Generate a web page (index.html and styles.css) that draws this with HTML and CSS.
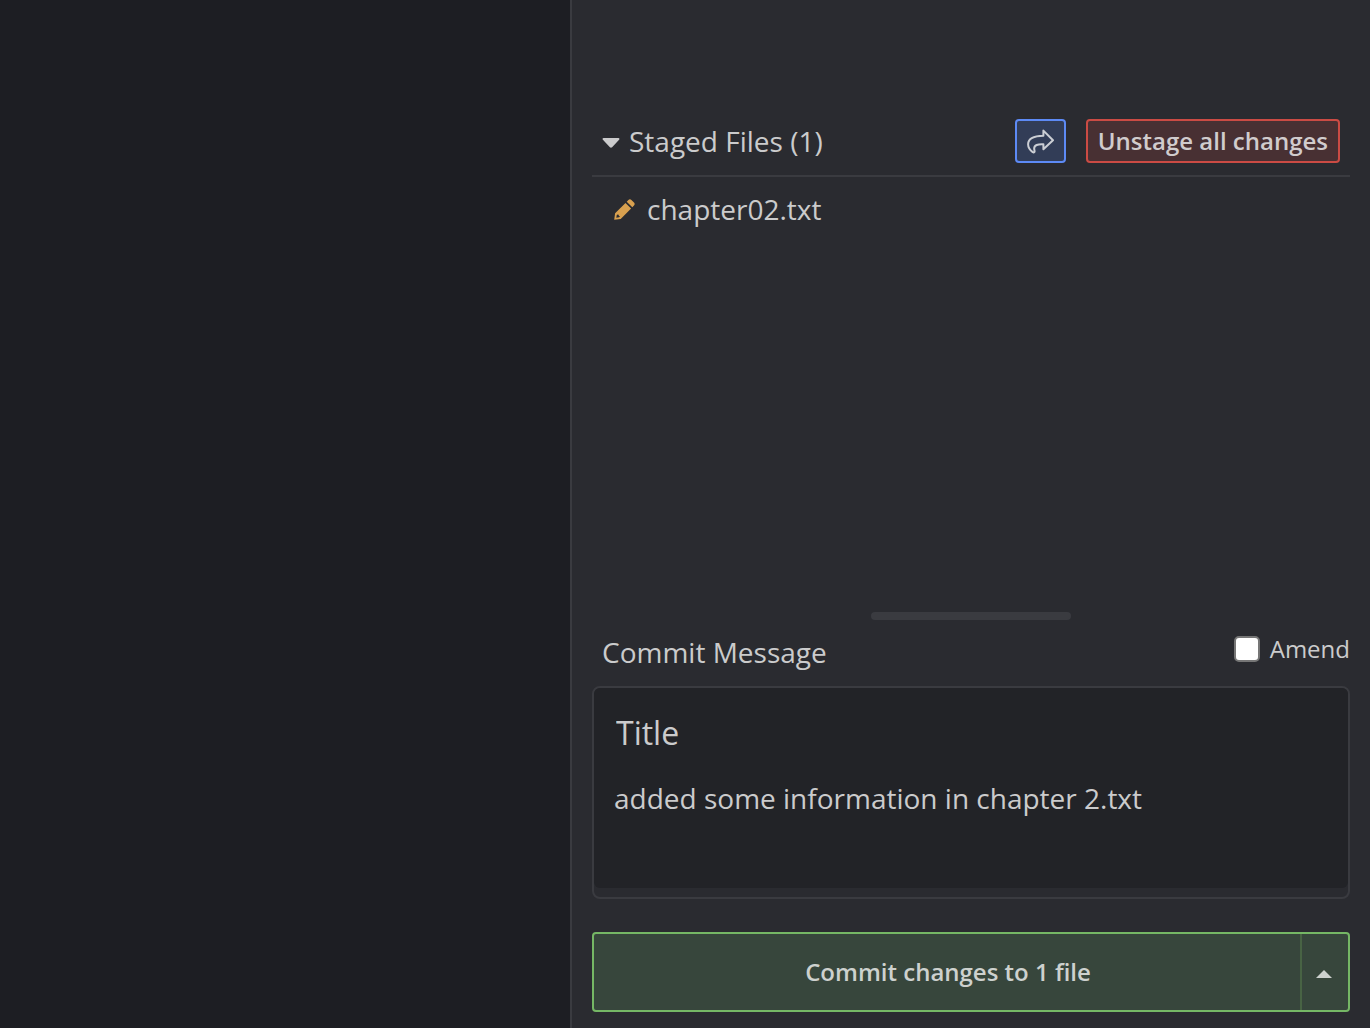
FILE: index.html
```html
<!DOCTYPE html>
<html lang="en">
<head>
<meta charset="utf-8">
<meta name="viewport" content="width=device-width, initial-scale=1">
<title>Commit panel</title>
<link rel="stylesheet" href="styles.css">
</head>
<body>
<main class="graph" aria-label="Commit graph"></main>
<aside class="panel">
  <section class="staged">
    <header class="staged-header">
      <button class="toggle" type="button" aria-expanded="true">
        <svg class="caret" viewBox="0 -4 18 14" aria-hidden="true"><path d="M1.6 0h14.8c1 0 1.4 1 .7 1.7l-7 7.6c-.6.6-1.6.6-2.2 0l-7-7.6C.2 1 .6 0 1.6 0z"/></svg>
        <span>Staged Files (1)</span>
      </button>
      <button class="btn btn-share" type="button" aria-label="Share changes">
        <svg class="share-icon" viewBox="0 0 27 25" aria-hidden="true"><path d="M16.4 1.6 L26 11.2 L16.4 20.2 V15.2 C11 14.9 6.9 16 7.2 19.8 C7.3 21.2 7.8 22 7.5 22.9 C7.2 23.6 6.4 23.7 5.7 23.1 C2.9 21 1.1 18.4 1.1 15.3 C1.2 9.2 7 7 16.4 6.8 Z"/></svg>
      </button>
      <button class="btn btn-unstage" type="button">Unstage all changes</button>
    </header>
    <ul class="files">
      <li class="file">
        <svg class="pencil" viewBox="0 0 21 21" aria-hidden="true"><path d="M12.7 2.7 14.4 1c.9-.9 2.1-.9 3 0l2.6 2.6c.9.9.9 2.1 0 3l-1.7 1.7z"/><path fill-rule="evenodd" d="M11.5 3.9 17.1 9.5 6.7 19.9.2 20.8 1.1 14.3zM2.8 15.9 2.3 18.7l2.8-.5 1-1-1.2-.2-.2-1.2-1.1-.2z"/></svg>
        <span>chapter02.txt</span>
      </li>
    </ul>
  </section>
  <div class="resizer" role="separator" aria-orientation="horizontal"></div>
  <form class="commit">
    <div class="commit-header">
      <h2 class="commit-heading">Commit Message</h2>
      <label class="amend"><input class="amend-box" type="checkbox">Amend</label>
    </div>
    <div class="message">
      <div class="message-fields">
        <input class="summary" type="text" value="Title" aria-label="Commit summary">
        <textarea class="description" aria-label="Commit description" spellcheck="false">added some information in chapter 2.txt</textarea>
      </div>
    </div>
    <div class="submit">
      <button class="submit-main" type="button">Commit changes to 1 file</button>
      <button class="submit-more" type="button" aria-label="More commit options">
        <svg class="up" viewBox="0 -4 16 12" aria-hidden="true"><path d="M0 8 8 0l8 8z"/></svg>
      </button>
    </div>
  </form>
</aside>
</body>
</html>
```
FILE: styles.css
```css
* { box-sizing: border-box; }

body {
  margin: 0;
  min-height: 100vh;
  display: flex;
  background: #1d1e23;
  color: #cbcbcc;
  font: 28px/40px "Open Sans", sans-serif;
}

button, input, textarea {
  margin: 0;
  font: inherit;
  color: inherit;
}

.graph { flex: 1; }

.panel {
  flex: 0 0 800px;
  display: flex;
  flex-direction: column;
  padding: 109px 20px 16px;
  background: #2a2b30;
  border-left: 2px solid #3a3b40;
}

.staged { flex: 1; }

.staged-header {
  display: flex;
  align-items: center;
  gap: 20px;
  padding: 10px 10px 12px;
  border-bottom: 2px solid #3a3b40;
}

.toggle {
  display: flex;
  align-items: center;
  gap: 9px;
  margin-right: auto;
  padding: 0;
  border: 0;
  background: none;
}

.caret { width: 18px; height: 14px; fill: currentColor; }

.btn {
  height: 44px;
  padding: 0 10px;
  border: 2px solid;
  border-radius: 4px;
}

.btn-share {
  display: flex;
  align-items: center;
  background: #323d57;
  border-color: #5d8af5;
}

.share-icon {
  width: 27px;
  height: 25px;
  fill: none;
  stroke: #cbced4;
  stroke-width: 2;
  stroke-linejoin: round;
}

.btn-unstage {
  background: #483033;
  border-color: #cb4b44;
  color: #d1cccd;
  font-size: 24px;
  font-weight: 600;
  line-height: 40px;
}

.files {
  margin: 0;
  padding: 12px 22px;
  list-style: none;
}

.file {
  display: flex;
  align-items: center;
  gap: 12px;
}

.pencil { width: 21px; height: 21px; fill: #d8a04f; }

.resizer {
  align-self: center;
  width: 200px;
  height: 8px;
  border-radius: 4px;
  background: #3a3b40;
}

.commit-header {
  display: flex;
  justify-content: space-between;
  padding: 12px 0 14px 10px;
}

.commit-heading {
  margin: 0;
  font-size: 28px;
  font-weight: 400;
}

.amend {
  display: flex;
  align-items: center;
  gap: 10px;
  height: 34px;
  font-size: 24px;
}

.amend-box {
  appearance: none;
  width: 26px;
  height: 26px;
  border: 2px solid #767676;
  border-radius: 5px;
  background: #fff;
}

.message {
  padding-bottom: 9px;
  border: 2px solid #3a3b40;
  border-radius: 8px;
}

.message-fields {
  display: flex;
  flex-direction: column;
  height: 200px;
  padding: 20px;
  border-radius: 6px;
  background: #222327;
}

.summary {
  height: 48px;
  padding: 0 2px;
  border: 0;
  background: none;
  font-size: 32px;
}

.description {
  flex: 1;
  padding: 22px 0 0;
  border: 0;
  background: none;
  resize: none;
}

.submit {
  display: flex;
  height: 80px;
  margin-top: 33px;
  border: 2px solid #75b765;
  border-radius: 4px;
  background: #37463c;
  color: #cdd1ce;
}

.submit-main, .submit-more {
  padding: 0;
  border: 0;
  background: none;
}

.submit-main {
  flex: 1;
  padding-left: 2px;
  font-size: 24px;
  font-weight: 600;
}

.submit-more {
  display: flex;
  align-items: center;
  justify-content: center;
  width: 48px;
  padding-right: 2px;
  border-left: 2px solid #486344;
}

.up { width: 16px; height: 12px; fill: currentColor; }
```
